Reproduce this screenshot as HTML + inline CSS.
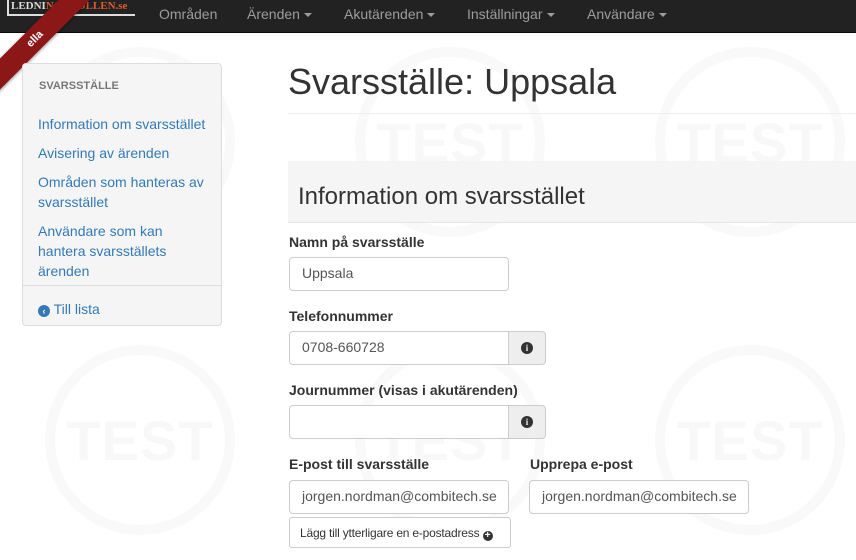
<!DOCTYPE html>
<html><head><meta charset="utf-8"><style>
*{box-sizing:border-box}
body{margin:0;width:856px;height:560px;overflow:hidden;background:#fff;font-family:"Liberation Sans",Arial,sans-serif;font-size:14px;color:#333;position:relative}
.wm{position:absolute;width:190px;height:190px;border:10px solid #f9f9f9;border-radius:50%;display:flex;align-items:center;justify-content:center;font-weight:bold;font-size:56px;color:#f8f8f8;letter-spacing:1px}
.nav{position:absolute;left:0;top:0;width:856px;height:33px;background:#222;border-bottom:1px solid #080808}
.nav a{position:absolute;top:6px;color:#9d9d9d;font-size:14px}
.caret{display:inline-block;width:0;height:0;border-left:4px solid transparent;border-right:4px solid transparent;border-top:4px solid #9d9d9d;vertical-align:middle;margin-left:4px}
.logo{position:absolute;left:7px;top:0;width:128px;height:16px;border-left:2px solid #ddd;border-bottom:2px solid #ddd;color:#ddd;font:bold 11px "Liberation Serif",serif;padding-left:2px}
.ribbon{position:absolute;left:-40px;top:28px;width:150px;height:22px;background:#8b1717;transform:rotate(-45deg);color:#fff;font-weight:bold;font-size:11px;text-align:center;line-height:22px;box-shadow:0 1px 3px rgba(0,0,0,.4)}
.side{position:absolute;left:22px;top:63px;width:200px;height:263px;background:#f5f5f5;border:1px solid #ddd;border-radius:4px}
.side .h{position:absolute;left:16px;top:16px;font-size:11px;font-weight:bold;color:#777}
.side a{position:absolute;left:15px;color:#337ab7;font-size:14px;line-height:20px}
.side .hr{position:absolute;left:0;right:0;top:221px;border-top:1px solid #ddd}
h1{position:absolute;left:288px;top:61px;margin:0;font-size:36px;font-weight:400;color:#333}
.hr1{position:absolute;left:288px;right:0;top:113px;border-top:1px solid #eee}
.box{position:absolute;left:288px;right:0;top:161px;height:62px;background:#f5f5f5;border-bottom:1px solid #e5e5e5}
.box h2{margin:0;position:absolute;left:10px;top:22px;font-size:24px;font-weight:400}
label{position:absolute;font-weight:bold;font-size:14px}
.inp{position:absolute;height:34px;border:1px solid #ccc;border-radius:4px;background:#fff;padding:7px 12px;font-size:14px;color:#555}
.add{position:absolute;width:38px;height:34px;border:1px solid #ccc;border-radius:0 4px 4px 0;background:#eee;display:flex;align-items:center;justify-content:center}
.ic{width:12px;height:12px;border-radius:50%;background:#333;color:#eee;font:bold 9px "Liberation Serif",serif;text-align:center;line-height:12px}
.btn{position:absolute;left:289px;top:517px;width:222px;height:31px;border:1px solid #ccc;border-radius:3px;background:#fff;font-size:12px;padding:8px 10px;color:#333;white-space:nowrap;letter-spacing:-0.2px}
</style></head><body>
<div class="wm" style="left:45px;top:47px">TEST</div>
<div class="wm" style="left:355px;top:47px">TEST</div>
<div class="wm" style="left:655px;top:47px">TEST</div>
<div class="wm" style="left:45px;top:345px">TEST</div>
<div class="wm" style="left:355px;top:345px">TEST</div>
<div class="wm" style="left:655px;top:345px">TEST</div>
<div class="nav">
<div class="logo">LEDNI<span style="color:#e05a2b">NGSKOLLEN.se</span></div>
<a style="left:159px">Områden</a>
<a style="left:247px">Ärenden<span class="caret"></span></a>
<a style="left:344px">Akutärenden<span class="caret"></span></a>
<a style="left:467px">Inställningar<span class="caret"></span></a>
<a style="left:587px">Användare<span class="caret"></span></a>
</div>
<div class="ribbon">ella</div>
<div class="side">
<div class="h">SVARSSTÄLLE</div>
<a style="top:50px">Information om svarsstället</a>
<a style="top:79px">Avisering av ärenden</a>
<a style="top:108px">Områden som hanteras av<br>svarsstället</a>
<a style="top:157px">Användare som kan<br>hantera svarsställets<br>ärenden</a>
<div class="hr"></div>
<a style="top:235px"><span style="display:inline-block;width:12px;height:12px;border-radius:50%;background:#337ab7;color:#fff;font-size:9px;line-height:12px;text-align:center;font-weight:bold">&lsaquo;</span> Till lista</a>
</div>
<h1>Svarsställe: Uppsala</h1>
<div class="hr1"></div>
<div class="box"><h2>Information om svarsstället</h2></div>
<label style="left:289px;top:234px">Namn på svarsställe</label>
<div class="inp" style="left:289px;top:257px;width:220px">Uppsala</div>
<label style="left:289px;top:308px">Telefonnummer</label>
<div class="inp" style="left:289px;top:331px;width:220px;border-radius:4px 0 0 4px">0708-660728</div>
<div class="add" style="left:508px;top:331px"><div class="ic">i</div></div>
<label style="left:289px;top:382px">Journummer (visas i akutärenden)</label>
<div class="inp" style="left:289px;top:405px;width:220px;border-radius:4px 0 0 4px"></div>
<div class="add" style="left:508px;top:405px"><div class="ic">i</div></div>
<label style="left:289px;top:456px">E-post till svarsställe</label>
<label style="left:530px;top:456px">Upprepa e-post</label>
<div class="inp" style="left:289px;top:480px;width:220px">jorgen.nordman@combitech.se</div>
<div class="inp" style="left:529px;top:480px;width:220px">jorgen.nordman@combitech.se</div>
<div class="btn">Lägg till ytterligare en e-postadress <span style="display:inline-block;width:10px;height:10px;border-radius:50%;background:#333;color:#fff;font-size:10px;line-height:10px;text-align:center;font-weight:bold;vertical-align:-1px">+</span></div>
</body></html>
